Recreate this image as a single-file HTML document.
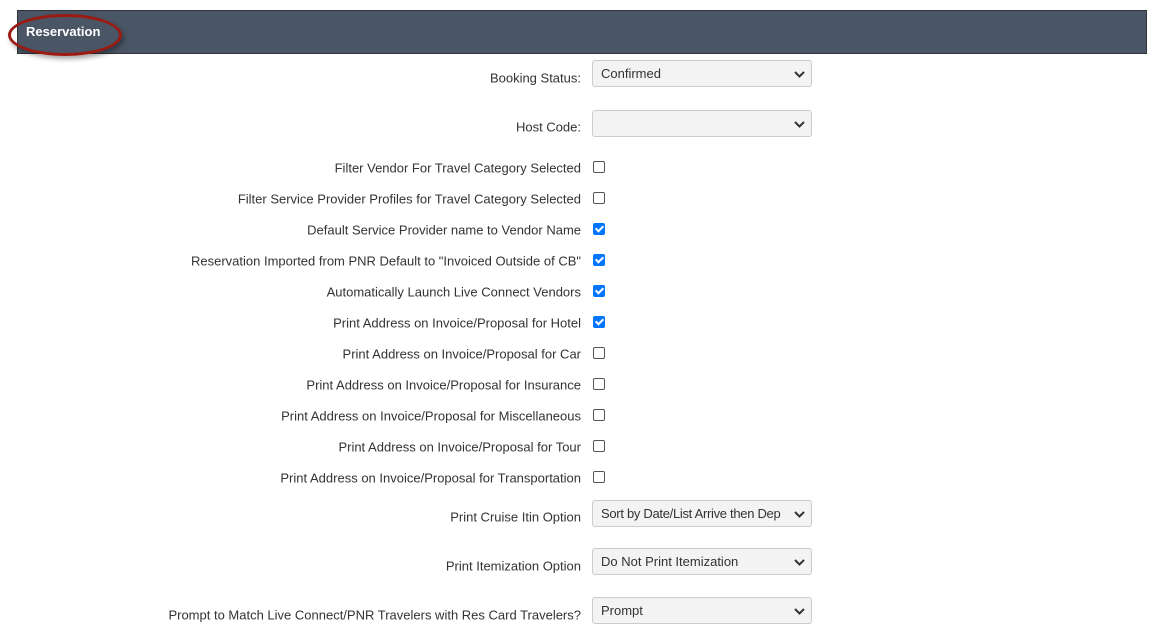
<!DOCTYPE html>
<html><head><style>
body{margin:0;background:#fff;font-family:"Liberation Sans",Arial,sans-serif;color:#333;width:1162px;height:639px;position:relative;overflow:hidden}
.hdr{position:absolute;left:17px;top:10px;width:1128px;height:42px;background:#4a5565;border:1px solid #333}
.hdr span{position:absolute;left:8px;top:13px;color:#fff;font-weight:bold;font-size:13px}
.oval{position:absolute;left:8px;top:14px;width:108px;height:36px;border:3px solid #9b1a12;border-radius:50%;box-shadow:2px 3px 5px rgba(0,0,0,.35)}
.lbl{position:absolute;right:581px;font-size:13px;white-space:nowrap;transform:translateY(-50%);margin-top:1px}
.cb{position:absolute;left:593px;width:10px;height:10px;border:1px solid #555;border-radius:2px;background:#fff;transform:translateY(-50%)}
.cb.on{background:#0075ff;border-color:#0075ff}
.cb.on:after{content:"";position:absolute;left:3px;top:0px;width:3px;height:6px;border:solid #fff;border-width:0 2px 2px 0;transform:rotate(45deg)}
.sel{position:absolute;left:592px;width:220px;height:27px;background:#f3f3f3;border:1px solid #ccc;border-radius:3px;box-sizing:border-box;font-size:13px;padding:5px 8px;color:#333;white-space:nowrap;overflow:hidden}
.sel svg{position:absolute;right:6px;top:10px}
</style></head><body>
<div class="hdr"><span>Reservation</span></div>
<div class="oval"></div>

<div class="lbl" style="top:77px">Booking Status:</div>
<div class="sel" style="top:60px">Confirmed<svg width="11" height="7" viewBox="0 0 11 7"><path d="M1 1l4.5 4.5L10 1" stroke="#333" stroke-width="2" fill="none"/></svg></div>
<div class="lbl" style="top:126px">Host Code:</div>
<div class="sel" style="top:110px"><svg width="11" height="7" viewBox="0 0 11 7"><path d="M1 1l4.5 4.5L10 1" stroke="#333" stroke-width="2" fill="none"/></svg></div>

<div class="lbl" style="top:167px">Filter Vendor For Travel Category Selected</div><div class="cb" style="top:167px"></div>
<div class="lbl" style="top:198px">Filter Service Provider Profiles for Travel Category Selected</div><div class="cb" style="top:198px"></div>
<div class="lbl" style="top:229px">Default Service Provider name to Vendor Name</div><div class="cb on" style="top:229px"></div>
<div class="lbl" style="top:260px">Reservation Imported from PNR Default to "Invoiced Outside of CB"</div><div class="cb on" style="top:260px"></div>
<div class="lbl" style="top:291px">Automatically Launch Live Connect Vendors</div><div class="cb on" style="top:291px"></div>
<div class="lbl" style="top:322px">Print Address on Invoice/Proposal for Hotel</div><div class="cb on" style="top:322px"></div>
<div class="lbl" style="top:353px">Print Address on Invoice/Proposal for Car</div><div class="cb" style="top:353px"></div>
<div class="lbl" style="top:384px">Print Address on Invoice/Proposal for Insurance</div><div class="cb" style="top:384px"></div>
<div class="lbl" style="top:415px">Print Address on Invoice/Proposal for Miscellaneous</div><div class="cb" style="top:415px"></div>
<div class="lbl" style="top:446px">Print Address on Invoice/Proposal for Tour</div><div class="cb" style="top:446px"></div>
<div class="lbl" style="top:477px">Print Address on Invoice/Proposal for Transportation</div><div class="cb" style="top:477px"></div>

<div class="lbl" style="top:516px">Print Cruise Itin Option</div>
<div class="sel" style="top:500px;letter-spacing:-0.3px">Sort by Date/List Arrive then Dep<svg width="11" height="7" viewBox="0 0 11 7" style="background:#f3f3f3"><path d="M1 1l4.5 4.5L10 1" stroke="#333" stroke-width="2" fill="none"/></svg></div>
<div class="lbl" style="top:565px">Print Itemization Option</div>
<div class="sel" style="top:548px">Do Not Print Itemization<svg width="11" height="7" viewBox="0 0 11 7"><path d="M1 1l4.5 4.5L10 1" stroke="#333" stroke-width="2" fill="none"/></svg></div>
<div class="lbl" style="top:614px">Prompt to Match Live Connect/PNR Travelers with Res Card Travelers?</div>
<div class="sel" style="top:597px">Prompt<svg width="11" height="7" viewBox="0 0 11 7"><path d="M1 1l4.5 4.5L10 1" stroke="#333" stroke-width="2" fill="none"/></svg></div>
</body></html>
